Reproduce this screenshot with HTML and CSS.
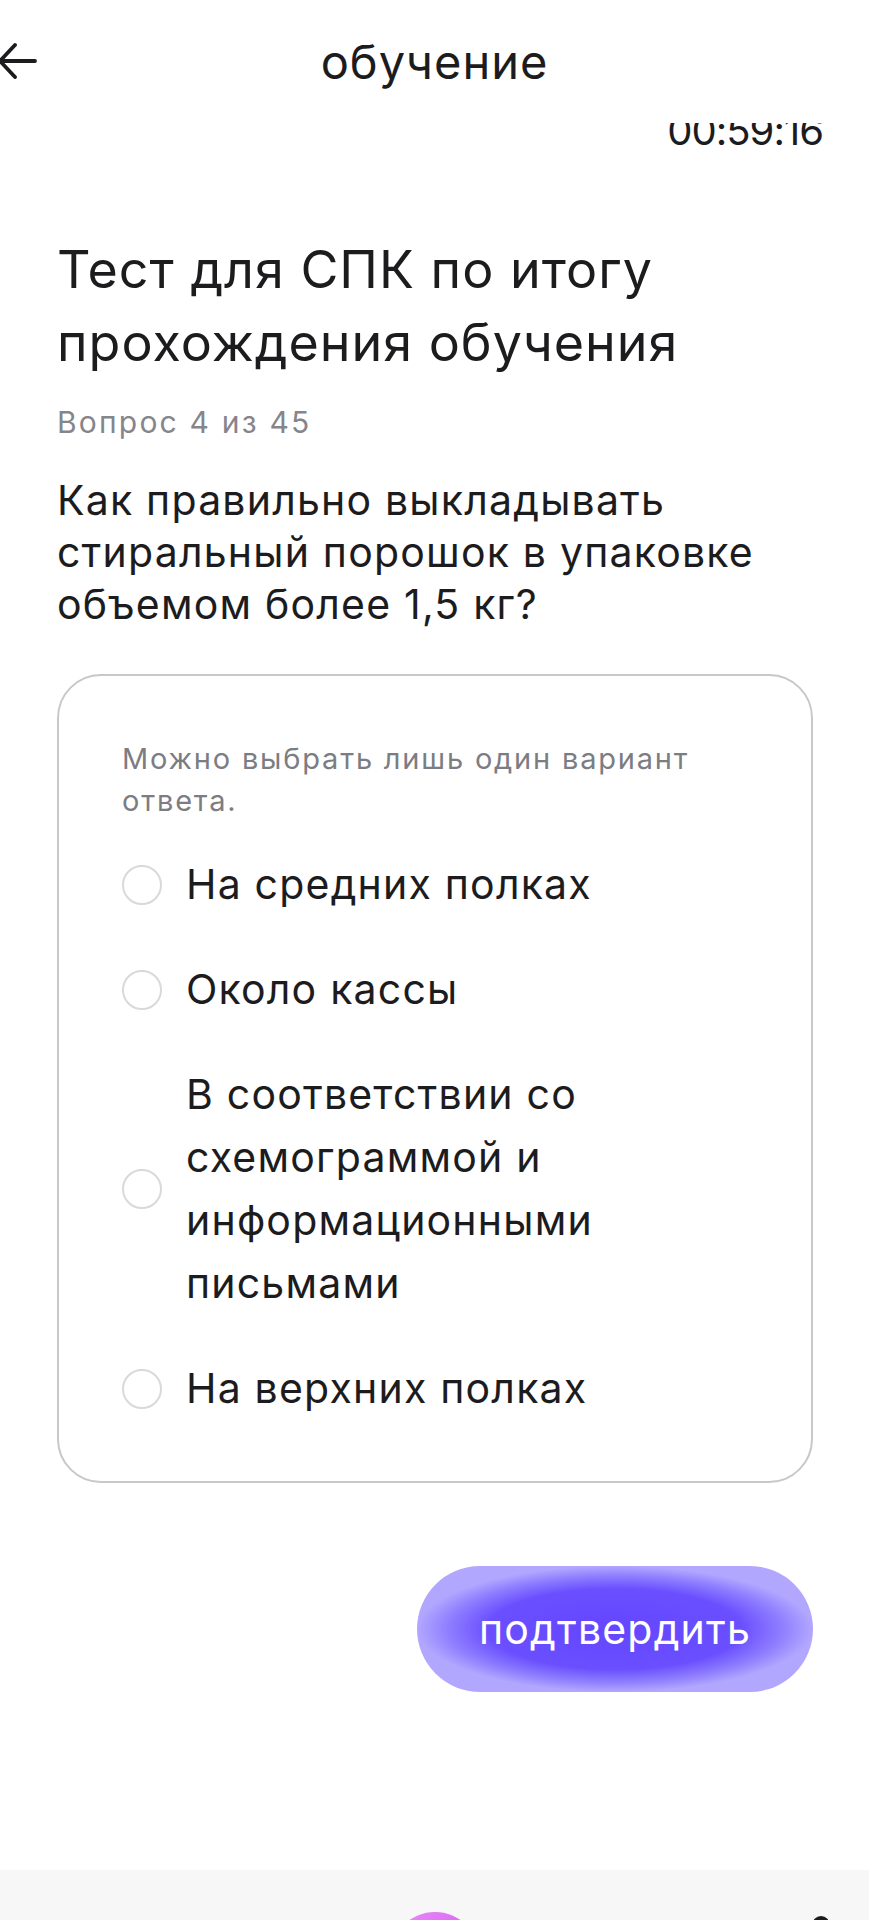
FILE: index.html
```html
<!DOCTYPE html>
<html lang="ru">
<head>
    <meta charset="UTF-8">
    <meta name="viewport" content="width=device-width, initial-scale=1.0">
    <title>обучение</title>
    <link rel="stylesheet" href="styles.css">
</head>
<body>
<div class="header">
    <a class="back" href="#">
        <svg width="40" height="40" viewBox="0 0 40 40">
            <path d="M37 20 H4 M17 4 L2 20 L17 36" fill="none" stroke="#1c1c1e" stroke-width="3.8" stroke-linecap="round" stroke-linejoin="round"/>
        </svg>
    </a>
    <div class="header-title">обучение</div>
</div>

<div class="timer-row">
    <span class="timer">00:59:16</span>
</div>

<div class="content">
    <h1 class="test-title">Тест для СПК по итогу прохождения обучения</h1>
    <div class="counter">Вопрос 4 из 45</div>
    <div class="question">Как правильно выкладывать стиральный порошок в упаковке объемом более 1,5 кг?</div>

    <form class="card">
        <div class="hint">Можно выбрать лишь один вариант ответа.</div>
        <div class="options">
            <label class="option">
                <input type="radio" name="answer" class="radio">
                <span class="option-text">На средних полках</span>
            </label>
            <label class="option">
                <input type="radio" name="answer" class="radio">
                <span class="option-text">Около кассы</span>
            </label>
            <label class="option">
                <input type="radio" name="answer" class="radio">
                <span class="option-text">В соответствии со схемограммой и информационными письмами</span>
            </label>
            <label class="option">
                <input type="radio" name="answer" class="radio">
                <span class="option-text">На верхних полках</span>
            </label>
        </div>
    </form>

    <div class="actions">
        <button class="btn-confirm" type="button">подтвердить</button>
    </div>
</div>

<div class="tabbar">
    <div class="tab"></div>
    <div class="tab"></div>
    <div class="tab"><span class="tab-main"></span></div>
    <div class="tab"></div>
    <div class="tab"><span class="tab-icon"></span></div>
</div>
</body>
</html>
```

FILE: styles.css
```css
body {
    margin: 0;
    background: #ffffff;
    color: #1c1c1e;
    font-family: Inter, "Noto Sans", sans-serif;
    overflow: hidden;
}

.header {
    height: 123px;
    display: flex;
    align-items: center;
    justify-content: center;
    position: relative;
    background: #ffffff;
}

.back {
    position: absolute;
    left: -2px;
    top: 41px;
    display: flex;
}

.header-title {
    font-size: 47px;
    letter-spacing: 1px;
}

.timer-row {
    height: 28px;
    overflow: hidden;
    display: flex;
    justify-content: flex-end;
    align-items: flex-end;
    padding-right: 46px;
}

.timer {
    font-size: 40px;
    line-height: 40px;
    letter-spacing: -1px;
}

.content {
    padding: 0 56px 0 57px;
}

.test-title {
    margin: 82px 0 0;
    font-size: 52px;
    font-weight: 400;
    line-height: 73px;
    letter-spacing: 1px;
}

.counter {
    margin-top: 25px;
    font-size: 30px;
    line-height: 36px;
    letter-spacing: 2.2px;
    color: #85858b;
}

.question {
    margin-top: 34px;
    font-size: 41px;
    line-height: 52px;
    letter-spacing: 1.2px;
}

.card {
    margin-top: 44px;
    border: 2px solid #c6c8cc;
    border-radius: 44px;
    padding: 62px 62px 61px 63px;
}

.hint {
    font-size: 29px;
    line-height: 42px;
    letter-spacing: 1.8px;
    color: #7b7d83;
}

.options {
    margin-top: 31px;
    display: flex;
    flex-direction: column;
    gap: 42px;
}

.option {
    display: flex;
    align-items: center;
    gap: 24px;
}

.radio {
    appearance: none;
    margin: 0;
    width: 40px;
    height: 40px;
    flex: none;
    border: 2px solid #d9d9db;
    border-radius: 50%;
    box-sizing: border-box;
}

.option-text {
    max-width: 450px;
    font-size: 41px;
    line-height: 63px;
    letter-spacing: 1.2px;
}

.actions {
    margin-top: 83px;
    display: flex;
    justify-content: flex-end;
}

.btn-confirm {
    width: 396px;
    height: 126px;
    border: 0;
    border-radius: 63px;
    background: radial-gradient(ellipse farthest-side at 50% 50%, #6446ff 0%, #6a4fff 64%, #8e7eff 84%, #b2a7ff 100%);
    color: #ffffff;
    font-family: Inter, "Noto Sans", sans-serif;
    font-size: 41px;
    letter-spacing: 1.2px;
}

.tabbar {
    margin-top: 178px;
    height: 120px;
    background: #f7f7f8;
    display: grid;
    grid-template-columns: repeat(5, 193px);
    justify-content: center;
    overflow: hidden;
    padding-top: 42px;
    box-sizing: border-box;
}

.tab {
    display: flex;
    justify-content: center;
}

.tab-main {
    width: 90px;
    height: 90px;
    border-radius: 50%;
    background: linear-gradient(135deg, #ec8cf8, #c64af0);
}

.tab-icon {
    margin-top: 4px;
    width: 18px;
    height: 18px;
    border: 4px solid #1c1c1e;
    border-radius: 50%;
    box-sizing: border-box;
}
```
